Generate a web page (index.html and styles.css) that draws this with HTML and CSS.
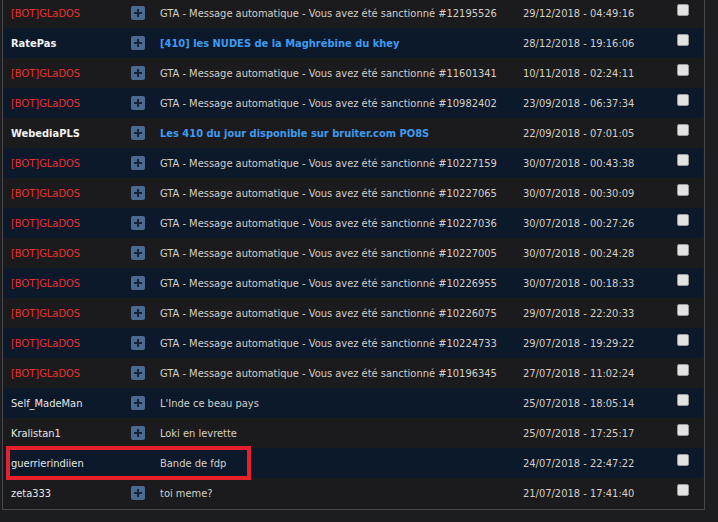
FILE: index.html
```html
<!DOCTYPE html>
<html lang="fr">
<head>
<meta charset="utf-8">
<title>Messages privés</title>
<link rel="stylesheet" href="styles.css">
</head>
<body>
<div class="panel">
  <div class="row">
    <span class="author bot">[BOT]GLaDOS</span>
    <span class="ico"><svg viewBox="0 0 14 14" width="14" height="14"><rect x="0" y="0" width="14" height="14" rx="2" fill="#4c6a8f"/><path d="M7 3v8M3 7h8" stroke="#13233a" stroke-width="2"/></svg></span>
    <span class="subject">GTA - Message automatique - Vous avez été sanctionné #12195526</span>
    <span class="date">29/12/2018 - 04:49:16</span>
    <span class="check"></span>
  </div>
  <div class="row alt">
    <span class="author strong">RatePas</span>
    <span class="ico"><svg viewBox="0 0 14 14" width="14" height="14"><rect x="0" y="0" width="14" height="14" rx="2" fill="#4c6a8f"/><path d="M7 3v8M3 7h8" stroke="#13233a" stroke-width="2"/></svg></span>
    <span class="subject link">[410] les NUDES de la Maghrébine du khey</span>
    <span class="date">28/12/2018 - 19:16:06</span>
    <span class="check"></span>
  </div>
  <div class="row">
    <span class="author bot">[BOT]GLaDOS</span>
    <span class="ico"><svg viewBox="0 0 14 14" width="14" height="14"><rect x="0" y="0" width="14" height="14" rx="2" fill="#4c6a8f"/><path d="M7 3v8M3 7h8" stroke="#13233a" stroke-width="2"/></svg></span>
    <span class="subject">GTA - Message automatique - Vous avez été sanctionné #11601341</span>
    <span class="date">10/11/2018 - 02:24:11</span>
    <span class="check"></span>
  </div>
  <div class="row alt">
    <span class="author bot">[BOT]GLaDOS</span>
    <span class="ico"><svg viewBox="0 0 14 14" width="14" height="14"><rect x="0" y="0" width="14" height="14" rx="2" fill="#4c6a8f"/><path d="M7 3v8M3 7h8" stroke="#13233a" stroke-width="2"/></svg></span>
    <span class="subject">GTA - Message automatique - Vous avez été sanctionné #10982402</span>
    <span class="date">23/09/2018 - 06:37:34</span>
    <span class="check"></span>
  </div>
  <div class="row">
    <span class="author strong">WebediaPLS</span>
    <span class="ico"><svg viewBox="0 0 14 14" width="14" height="14"><rect x="0" y="0" width="14" height="14" rx="2" fill="#4c6a8f"/><path d="M7 3v8M3 7h8" stroke="#13233a" stroke-width="2"/></svg></span>
    <span class="subject link">Les 410 du jour disponible sur bruiter.com PO8S</span>
    <span class="date">22/09/2018 - 07:01:05</span>
    <span class="check"></span>
  </div>
  <div class="row alt">
    <span class="author bot">[BOT]GLaDOS</span>
    <span class="ico"><svg viewBox="0 0 14 14" width="14" height="14"><rect x="0" y="0" width="14" height="14" rx="2" fill="#4c6a8f"/><path d="M7 3v8M3 7h8" stroke="#13233a" stroke-width="2"/></svg></span>
    <span class="subject">GTA - Message automatique - Vous avez été sanctionné #10227159</span>
    <span class="date">30/07/2018 - 00:43:38</span>
    <span class="check"></span>
  </div>
  <div class="row">
    <span class="author bot">[BOT]GLaDOS</span>
    <span class="ico"><svg viewBox="0 0 14 14" width="14" height="14"><rect x="0" y="0" width="14" height="14" rx="2" fill="#4c6a8f"/><path d="M7 3v8M3 7h8" stroke="#13233a" stroke-width="2"/></svg></span>
    <span class="subject">GTA - Message automatique - Vous avez été sanctionné #10227065</span>
    <span class="date">30/07/2018 - 00:30:09</span>
    <span class="check"></span>
  </div>
  <div class="row alt">
    <span class="author bot">[BOT]GLaDOS</span>
    <span class="ico"><svg viewBox="0 0 14 14" width="14" height="14"><rect x="0" y="0" width="14" height="14" rx="2" fill="#4c6a8f"/><path d="M7 3v8M3 7h8" stroke="#13233a" stroke-width="2"/></svg></span>
    <span class="subject">GTA - Message automatique - Vous avez été sanctionné #10227036</span>
    <span class="date">30/07/2018 - 00:27:26</span>
    <span class="check"></span>
  </div>
  <div class="row">
    <span class="author bot">[BOT]GLaDOS</span>
    <span class="ico"><svg viewBox="0 0 14 14" width="14" height="14"><rect x="0" y="0" width="14" height="14" rx="2" fill="#4c6a8f"/><path d="M7 3v8M3 7h8" stroke="#13233a" stroke-width="2"/></svg></span>
    <span class="subject">GTA - Message automatique - Vous avez été sanctionné #10227005</span>
    <span class="date">30/07/2018 - 00:24:28</span>
    <span class="check"></span>
  </div>
  <div class="row alt">
    <span class="author bot">[BOT]GLaDOS</span>
    <span class="ico"><svg viewBox="0 0 14 14" width="14" height="14"><rect x="0" y="0" width="14" height="14" rx="2" fill="#4c6a8f"/><path d="M7 3v8M3 7h8" stroke="#13233a" stroke-width="2"/></svg></span>
    <span class="subject">GTA - Message automatique - Vous avez été sanctionné #10226955</span>
    <span class="date">30/07/2018 - 00:18:33</span>
    <span class="check"></span>
  </div>
  <div class="row">
    <span class="author bot">[BOT]GLaDOS</span>
    <span class="ico"><svg viewBox="0 0 14 14" width="14" height="14"><rect x="0" y="0" width="14" height="14" rx="2" fill="#4c6a8f"/><path d="M7 3v8M3 7h8" stroke="#13233a" stroke-width="2"/></svg></span>
    <span class="subject">GTA - Message automatique - Vous avez été sanctionné #10226075</span>
    <span class="date">29/07/2018 - 22:20:33</span>
    <span class="check"></span>
  </div>
  <div class="row alt">
    <span class="author bot">[BOT]GLaDOS</span>
    <span class="ico"><svg viewBox="0 0 14 14" width="14" height="14"><rect x="0" y="0" width="14" height="14" rx="2" fill="#4c6a8f"/><path d="M7 3v8M3 7h8" stroke="#13233a" stroke-width="2"/></svg></span>
    <span class="subject">GTA - Message automatique - Vous avez été sanctionné #10224733</span>
    <span class="date">29/07/2018 - 19:29:22</span>
    <span class="check"></span>
  </div>
  <div class="row">
    <span class="author bot">[BOT]GLaDOS</span>
    <span class="ico"><svg viewBox="0 0 14 14" width="14" height="14"><rect x="0" y="0" width="14" height="14" rx="2" fill="#4c6a8f"/><path d="M7 3v8M3 7h8" stroke="#13233a" stroke-width="2"/></svg></span>
    <span class="subject">GTA - Message automatique - Vous avez été sanctionné #10196345</span>
    <span class="date">27/07/2018 - 11:02:24</span>
    <span class="check"></span>
  </div>
  <div class="row alt">
    <span class="author">Self_MadeMan</span>
    <span class="ico"><svg viewBox="0 0 14 14" width="14" height="14"><rect x="0" y="0" width="14" height="14" rx="2" fill="#4c6a8f"/><path d="M7 3v8M3 7h8" stroke="#13233a" stroke-width="2"/></svg></span>
    <span class="subject">L'Inde ce beau pays</span>
    <span class="date">25/07/2018 - 18:05:14</span>
    <span class="check"></span>
  </div>
  <div class="row">
    <span class="author">Kralistan1</span>
    <span class="ico"><svg viewBox="0 0 14 14" width="14" height="14"><rect x="0" y="0" width="14" height="14" rx="2" fill="#4c6a8f"/><path d="M7 3v8M3 7h8" stroke="#13233a" stroke-width="2"/></svg></span>
    <span class="subject">Loki en levrette</span>
    <span class="date">25/07/2018 - 17:25:17</span>
    <span class="check"></span>
  </div>
  <div class="row alt marked">
    <span class="author">guerrierindiien</span>
    <span class="ico"></span>
    <span class="subject">Bande de fdp</span>
    <span class="date">24/07/2018 - 22:47:22</span>
    <span class="check"></span>
    <span class="highlight"></span>
  </div>
  <div class="row">
    <span class="author">zeta333</span>
    <span class="ico"><svg viewBox="0 0 14 14" width="14" height="14"><rect x="0" y="0" width="14" height="14" rx="2" fill="#4c6a8f"/><path d="M7 3v8M3 7h8" stroke="#13233a" stroke-width="2"/></svg></span>
    <span class="subject">toi meme?</span>
    <span class="date">21/07/2018 - 17:41:40</span>
    <span class="check"></span>
  </div>
</div>
</body>
</html>
```

FILE: styles.css
```css
html, body {
  margin: 0;
  padding: 0;
  background: #1c1d21;
}

body {
  font-family: "DejaVu Sans Condensed", "DejaVu Sans", "Liberation Sans", sans-serif;
  font-stretch: condensed;
  font-size: 11px;
  color: #d4d0c8;
}

.panel {
  margin: -4px 0 0 2px;
  width: 699px;
  padding: 1px;
  border: 1px solid #48484a;
  background: #1b1b1d;
}

.row {
  display: grid;
  grid-template-columns: 120px 29px 363px 154px 12px;
  align-items: center;
  height: 30px;
  padding-left: 7px;
  background: #1b1b1d;
}

.row.alt {
  background: #0c192b;
}

.marked {
  position: relative;
}

.author {
  color: #e6e6e6;
  white-space: nowrap;
}

.author.bot {
  color: #e8312f;
}

.author.strong {
  font-weight: bold;
  color: #f2f2f2;
}

.ico {
  display: flex;
  height: 14px;
}

.ico svg {
  display: block;
}

.subject {
  white-space: nowrap;
  color: #d4d0c8;
}

.subject.link {
  font-weight: bold;
  color: #3d9cf2;
}

.date {
  white-space: nowrap;
  color: #d4d0c8;
}

.check {
  align-self: start;
  margin-top: 6px;
  width: 12px;
  height: 12px;
  box-sizing: border-box;
  background: #e2e2e2;
  border: 1px solid #9a9a9a;
  border-radius: 2px;
}

.highlight {
  position: absolute;
  left: 2px;
  top: -2px;
  width: 245px;
  height: 34px;
  box-sizing: border-box;
  border: 4px solid #e8202b;
  pointer-events: none;
}
```
